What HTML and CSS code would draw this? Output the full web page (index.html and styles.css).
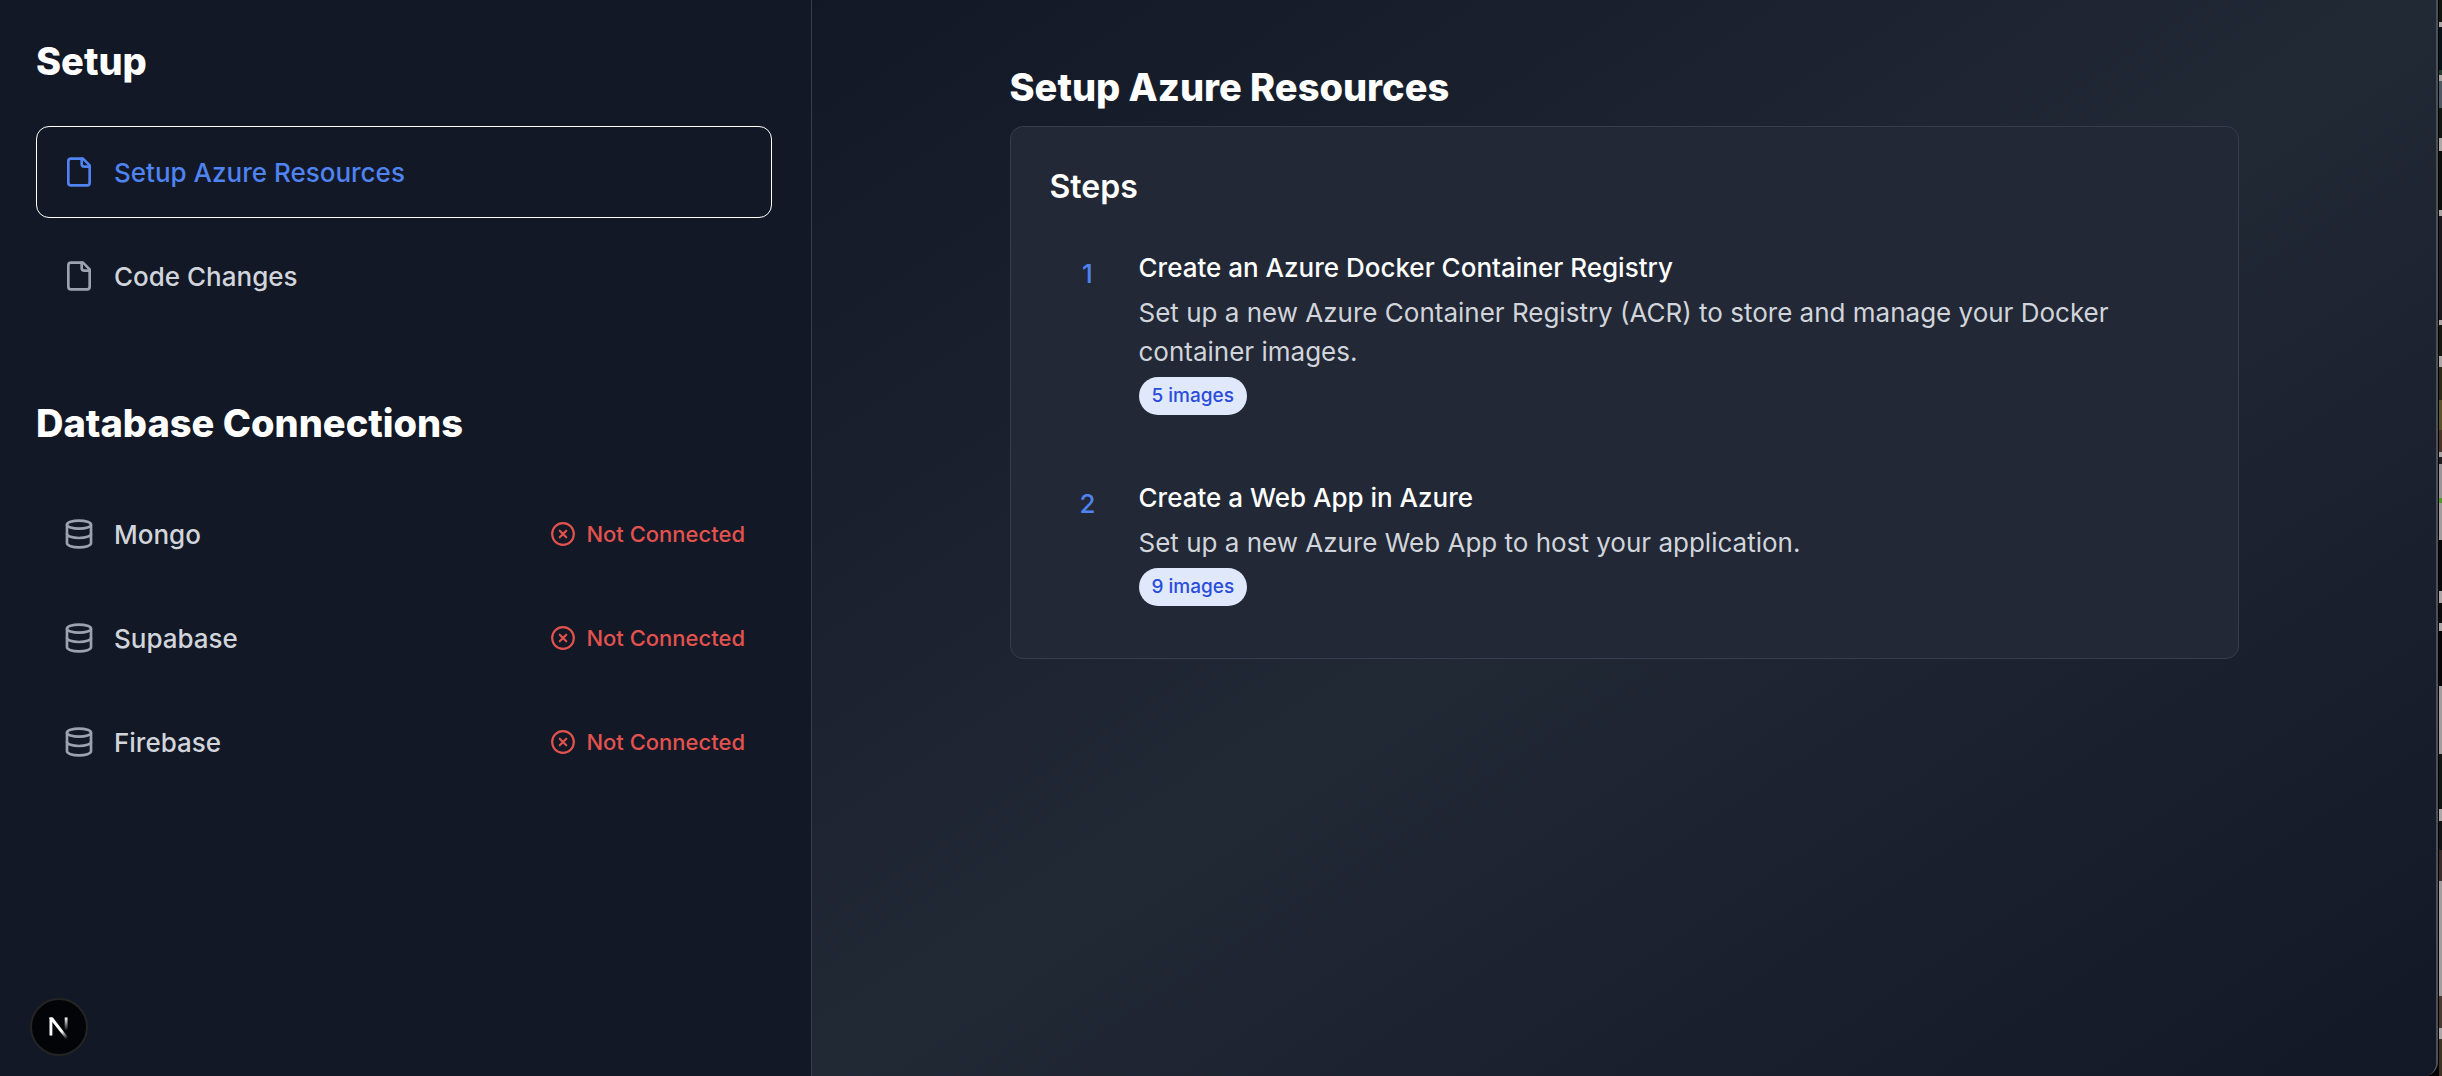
FILE: index.html
```html
<!DOCTYPE html>
<html lang="en">
<head>
<meta charset="utf-8">
<meta name="viewport" content="width=device-width, initial-scale=1">
<title>Setup Azure Resources</title>
<link rel="stylesheet" href="styles.css">
</head>
<body>
<svg class="sprite" aria-hidden="true">
  <symbol id="file" viewBox="0 0 24 24"><path d="M15 2H6a2 2 0 0 0-2 2v16a2 2 0 0 0 2 2h12a2 2 0 0 0 2-2V7Z"/><path d="M14 2v4a2 2 0 0 0 2 2h4"/></symbol>
  <symbol id="database" viewBox="0 0 24 24"><ellipse cx="12" cy="5" rx="9" ry="3"/><path d="M3 5v14a9 3 0 0 0 18 0V5"/><path d="M3 12a9 3 0 0 0 18 0"/></symbol>
  <symbol id="circle-x" viewBox="0 0 24 24"><circle cx="12" cy="12" r="10"/><path d="m15 9-6 6"/><path d="m9 9 6 6"/></symbol>
</svg>
<div class="desktop">
  <div class="window">
    <aside class="sidebar">
      <section class="group">
        <h2 class="heading">Setup</h2>
        <nav class="menu" aria-label="Setup">
          <a class="item item-active" href="#azure" aria-current="page"><svg class="icon"><use href="#file"/></svg>Setup Azure Resources</a>
          <a class="item" href="#code"><svg class="icon"><use href="#file"/></svg>Code Changes</a>
        </nav>
      </section>
      <section class="group">
        <h2 class="heading">Database Connections</h2>
        <nav class="menu" aria-label="Database Connections">
          <a class="item" href="#mongo"><svg class="icon"><use href="#database"/></svg>Mongo<span class="status"><svg class="icon-small"><use href="#circle-x"/></svg>Not Connected</span></a>
          <a class="item" href="#supabase"><svg class="icon"><use href="#database"/></svg>Supabase<span class="status"><svg class="icon-small"><use href="#circle-x"/></svg>Not Connected</span></a>
          <a class="item" href="#firebase"><svg class="icon"><use href="#database"/></svg>Firebase<span class="status"><svg class="icon-small"><use href="#circle-x"/></svg>Not Connected</span></a>
        </nav>
      </section>
    </aside>
    <main class="main">
      <div class="content">
        <h1 class="heading">Setup Azure Resources</h1>
        <section class="card">
          <h2 class="card-title">Steps</h2>
          <ol class="steps">
            <li class="step">
              <span class="number">1</span>
              <div class="step-body">
                <h3 class="step-title">Create an Azure Docker Container Registry</h3>
                <p class="step-text">Set up a new Azure Container Registry (ACR) to store and manage your Docker container images.</p>
                <span class="badge">5 images</span>
              </div>
            </li>
            <li class="step">
              <span class="number">2</span>
              <div class="step-body">
                <h3 class="step-title">Create a Web App in Azure</h3>
                <p class="step-text">Set up a new Azure Web App to host your application.</p>
                <span class="badge">9 images</span>
              </div>
            </li>
          </ol>
        </section>
      </div>
    </main>
  </div>
  <div class="backdrop" aria-hidden="true"></div>
</div>
<button class="dev-button" type="button" aria-label="Open Next.js Dev Tools">
  <svg class="dev-logo" viewBox="0 0 40 40" fill="none">
    <defs>
      <linearGradient id="diagonal" gradientUnits="userSpaceOnUse" x1="23" y1="24" x2="29" y2="32"><stop stop-color="#fff"/><stop offset="1" stop-color="#fff" stop-opacity="0"/></linearGradient>
      <linearGradient id="stem" gradientUnits="userSpaceOnUse" x1="28" y1="10" x2="28" y2="24"><stop stop-color="#fff"/><stop offset="1" stop-color="#fff" stop-opacity="0"/></linearGradient>
    </defs>
    <path d="M11.500 29V10" stroke="#fff" stroke-width="3"/>
    <path d="M10 10H13.600L29.800 31.200L27.400 33L10 11Z" fill="url(#diagonal)"/>
    <path d="M27.500 10V23" stroke="url(#stem)" stroke-width="3"/>
  </svg>
</button>
</body>
</html>
```
FILE: styles.css
```css
* { box-sizing: border-box; }

body {
  margin: 0;
  background: #000;
  color: #fff;
  font: 500 26px/39px Inter, "Liberation Sans", sans-serif;
}

h1, h2, h3, p, ol { margin: 0; padding: 0; }

.sprite { display: none; }

.desktop {
  display: flex;
  min-height: 100vh;
}

.window {
  flex: 1;
  display: grid;
  grid-template-columns: 1fr 2fr;
  overflow: hidden;
  border-right: 2px solid #4b505a;
  border-radius: 0 0 14px 0;
  background: #121825;
}

/* Slice of the desktop that shows beside the window */
.backdrop {
  width: 4px;
  border-left: 1px solid #000;
  background: linear-gradient(
    #10170f 0 22px, #aca7a4 22px 27px, #06131a 27px 70px, #1f3d2a 70px 75px,
    #aca7a4 75px 81px, #4d5a66 81px 108px, #10180f 108px 138px, #aca7a4 138px 151px,
    #0a0f09 151px 210px, #aca7a4 210px 216px, #1b171b 216px 320px, #aca7a4 320px 325px,
    #17180c 325px 356px, #aca7a4 356px 367px, #2c2a10 367px 400px, #5d5325 400px 430px,
    #4b3426 430px 452px, #aca7a4 452px 457px, #201d1e 457px 464px, #9a9594 464px 498px,
    #4c9a2c 498px 503px, #a29d9b 503px 540px, #070906 540px 591px, #aca7a4 591px 603px,
    #080b08 603px 623px, #aca7a4 623px 631px, #060503 631px 686px, #a29d9b 686px 754px,
    #101710 754px 809px, #aca7a4 809px 821px, #111514 821px 850px, #3a2d27 850px 881px,
    #a29d9b 881px 996px, #4a3a30 996px 1028px, #aca7a4 1028px 1039px, #3d3224 1039px);
}

.sidebar {
  display: flex;
  flex-direction: column;
  gap: 76px;
  padding: 36px 39px 36px 36px;
  border-right: 1px solid #373e4b;
  background: #121825;
}

.heading {
  font-size: 38px;
  line-height: 50px;
  font-weight: 800;
}

.menu {
  display: flex;
  flex-direction: column;
  gap: 12px;
  padding-top: 40px;
}

.item {
  display: flex;
  align-items: center;
  gap: 19px;
  height: 92px;
  padding: 0 26px;
  border: 1px solid transparent;
  border-radius: 13px;
  color: #d1d5db;
  text-decoration: none;
}

.item-active {
  border-color: #fff;
  color: #4f83f1;
}

.icon, .icon-small {
  flex: none;
  fill: none;
  stroke: currentColor;
  stroke-width: 2;
  stroke-linecap: round;
  stroke-linejoin: round;
}

.icon {
  width: 32px;
  height: 32px;
  color: #9ca3af;
}

.item-active .icon { color: inherit; }

.icon-small {
  width: 26px;
  height: 26px;
}

.status {
  display: flex;
  align-items: center;
  gap: 10px;
  margin-left: auto;
  color: #e2524e;
  font-size: 22px;
}

.main {
  padding: 62px 26px;
  background: linear-gradient(to bottom right, #121825, #212935 50%, #121825);
}

.content {
  max-width: 1229px;
  margin: 0 auto;
}

.card {
  margin-top: 14px;
  padding: 40px 39px;
  border: 1px solid #373e4b;
  border-radius: 13px;
  background: #222835;
}

.card-title {
  font-size: 32px;
  line-height: 40px;
  font-weight: 600;
}

.steps {
  display: flex;
  flex-direction: column;
  gap: 63px;
  padding: 41px 26px 12px;
  list-style: none;
}

.step {
  display: flex;
  gap: 39px;
}

.number {
  width: 24px;
  padding-top: 6px;
  color: #4f83f1;
  text-align: center;
}

.step-body { flex: 1; }

.step-title {
  font-size: 26px;
  line-height: 39px;
  font-weight: 500;
}

.step-text {
  padding: 6px 0;
  color: #d1d5db;
  font-weight: 400;
}

.badge {
  display: block;
  width: fit-content;
  padding: 0 13px;
  border-radius: 20px;
  background: #dfe9fb;
  color: #2a4cdb;
  font-size: 19px;
  line-height: 38px;
}

.dev-button {
  position: fixed;
  left: 30px;
  bottom: 20px;
  display: grid;
  place-items: center;
  width: 58px;
  height: 58px;
  padding: 0;
  border: 2px solid #242424;
  border-radius: 50%;
  background: #030407;
}

.dev-logo {
  width: 38px;
  height: 38px;
}
```
